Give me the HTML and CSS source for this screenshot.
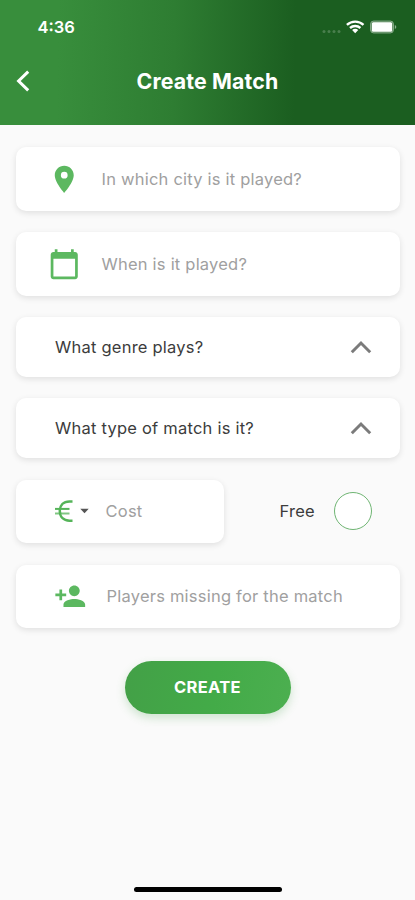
FILE: index.html
```html
<!DOCTYPE html>
<html lang="en">
<head>
<meta charset="utf-8">
<title>Create Match</title>
<link rel="stylesheet" href="styles.css">
</head>
<body>
<div class="screen">
  <header class="header">
    <div class="status">
      <span class="time">4:36</span>
      <svg class="status-icons" width="78" height="18" viewBox="0 0 78 18">
        <g fill="#fff" opacity=".2"><circle cx="3" cy="13.500" r="1.500"/><circle cx="8" cy="13.500" r="1.500"/><circle cx="13" cy="13.500" r="1.500"/><circle cx="18" cy="13.500" r="1.500"/></g>
        <g fill="none" stroke="#fff" stroke-width="2.400"><path d="M25.900 6.800a12.300 12.300 0 0 1 16.600 0"/><path d="M29 10a7.800 7.800 0 0 1 10.400 0"/></g>
        <path d="M31.100 12a4.800 4.800 0 0 1 6.200 0L34.200 15.200z" fill="#fff"/>
        <rect x="49.500" y="3" width="23" height="12" rx="3.200" fill="#fff" fill-opacity=".2" stroke="#fff" stroke-opacity=".4"/>
        <rect x="50.800" y="4.300" width="20.400" height="9.400" rx="1.500" fill="#fff"/>
        <path d="M73.800 7c2 .7 2 3.300 0 4z" fill="#fff" opacity=".5"/>
      </svg>
    </div>
    <div class="bar">
      <svg class="back" width="16" height="24" viewBox="0 0 16 24"><path d="M13.200 2.700 3.600 12l9.600 9.300" fill="none" stroke="#fff" stroke-width="3"/></svg>
      <h1 class="title">Create Match</h1>
    </div>
  </header>
  <main class="form">
    <div class="card field">
      <svg class="icon" viewBox="0 0 24 24"><path d="M12 2C8.130 2 5 5.130 5 9c0 5.250 7 13 7 13s7-7.750 7-13c0-3.870-3.130-7-7-7zm0 9.500a2.500 2.500 0 0 1 0-5 2.500 2.500 0 0 1 0 5z"/></svg>
      <span class="hint">In which city is it played?</span>
    </div>
    <div class="card field">
      <svg class="icon" viewBox="0 0 24 24"><path d="M20 3h-1V1h-2v2H7V1H5v2H4c-1.100 0-2 .9-2 2v16c0 1.100.9 2 2 2h16c1.100 0 2-.9 2-2V5c0-1.100-.9-2-2-2zm0 18H4V8h16v13z"/></svg>
      <span class="hint">When is it played?</span>
    </div>
    <div class="card select">
      <span class="label">What genre plays?</span>
      <svg class="chevron" viewBox="0 0 22 14"><path d="M1.800 12.200 11 3l9.200 9.200"/></svg>
    </div>
    <div class="card select">
      <span class="label">What type of match is it?</span>
      <svg class="chevron" viewBox="0 0 22 14"><path d="M1.800 12.200 11 3l9.200 9.200"/></svg>
    </div>
    <div class="cost-row">
      <div class="card cost">
        <svg class="euro" width="19" height="22" viewBox="0 0 19 22"><path d="M17.500 1.400h-3C8.300 1.400 4.800 5.500 4.800 11.100s3.500 9.600 9.700 9.600h3" stroke-width="2.500"/><path d="M0 8.900h14.500" stroke-width="2"/><path d="M0 13.500h14.500" stroke-width="2" opacity=".75"/></svg>
        <svg class="caret" width="9" height="6" viewBox="0 0 9 6"><path d="M.3.800h8.400L4.500 5.300z"/></svg>
        <span class="hint">Cost</span>
      </div>
      <span class="free">Free</span>
      <span class="radio"></span>
    </div>
    <div class="card field players">
      <svg class="icon" viewBox="0 0 24 24"><path d="M15 12c2.210 0 4-1.790 4-4s-1.790-4-4-4-4 1.790-4 4 1.790 4 4 4zm-9-2V7H4v3H1v2h3v3h2v-3h3v-2H6zm9 4c-2.670 0-8 1.340-8 4v2h16v-2c0-2.660-5.330-4-8-4z"/></svg>
      <span class="hint">Players missing for the match</span>
    </div>
    <button class="create">CREATE</button>
  </main>
  <div class="home"></div>
</div>
</body>
</html>
```
FILE: styles.css
```css
* { box-sizing: border-box; }
body { margin: 0; font-family: Inter, "Liberation Sans", sans-serif; background: #fafafa; }
svg { display: block; flex: none; }
.screen { width: 415px; height: 900px; display: flex; flex-direction: column; overflow: hidden; }
.header { height: 125px; padding-top: 17px; color: #fff; background: linear-gradient(91deg, #388e3c 14%, #2e7d32 42%, #1b5e20 71%); }
.status { height: 20px; display: flex; justify-content: space-between; align-items: center; padding: 0 16.5px 0 37.5px; }
.time { font-size: 16.5px; font-weight: 600; }
.bar { height: 54px; margin-top: 17px; display: grid; grid-template-columns: 48px 1fr 48px; align-items: center; }
.back { margin-left: 15px; margin-top: -1px; }
.title { margin: -1px 0 0; text-align: center; font-size: 21.3px; font-weight: 700; line-height: 26px; letter-spacing: .15px; }
.form { flex: 1; padding: 22px 15.5px 0; display: flex; flex-direction: column; gap: 21.3px; }
.card { display: flex; align-items: center; background: #fff; border-radius: 10px; box-shadow: 0 2px 6px rgba(0, 0, 0, .11); }
.field { height: 63.7px; padding-left: 32.5px; }
.icon { width: 32.5px; height: 32.5px; fill: #5cb860; }
.hint { margin-left: 21px; color: #a0a0a0; font-size: 16.5px; letter-spacing: .22px; white-space: nowrap; }
.select { height: 60px; padding: 0 28px 0 39.5px; justify-content: space-between; }
.label, .free { color: #3c3c3c; font-size: 16.5px; letter-spacing: .23px; white-space: nowrap; }
.chevron { width: 22px; height: 14px; fill: none; stroke: #7b7b7b; stroke-width: 3; }
.cost-row { display: flex; align-items: center; }
.cost { width: 208.5px; height: 63.7px; padding-left: 39.5px; }
.euro { fill: none; stroke: #55b459; }
.caret { margin-left: 5.5px; fill: #555; }
.cost .hint { margin-left: 17px; }
.free { margin-left: 55.5px; width: 54.5px; }
.radio { width: 38px; height: 38px; border: 1.5px solid #6fb573; border-radius: 50%; background: #fff; }
.players { padding-left: 38px; }
.players .hint { margin-left: 20.5px; }
.create { align-self: center; width: 166px; height: 53px; margin-top: 11px; padding: 0; border: 0; border-radius: 27px; color: #fff; background: linear-gradient(100deg, #43a047, #43ab48 55%, #4caf50); box-shadow: 0 4px 10px rgba(67, 160, 71, .24); font: 700 16.5px Inter, sans-serif; letter-spacing: .3px; }
.home { align-self: center; width: 148px; height: 5.5px; margin-bottom: 8px; border-radius: 3px; background: #000; }
```
